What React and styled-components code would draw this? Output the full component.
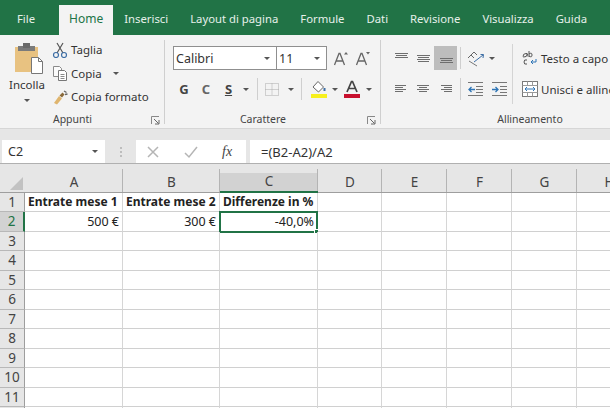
import React from "react";
import styled, { createGlobalStyle, css } from "styled-components";

const GlobalStyle = createGlobalStyle`
  html, body {
    margin: 0;
    padding: 0;
    background: #ffffff;
  }
  body {
    width: 610px;
    height: 408px;
    overflow: hidden;
    font-family: "Noto Sans", "Open Sans", sans-serif;
  }
  * { box-sizing: border-box; }
`;

const Window = styled.div`
  width: 610px;
  height: 408px;
  overflow: hidden;
  display: flex;
  flex-direction: column;
`;

const TabBar = styled.div`
  height: 35px;
  flex: none;
  display: flex;
  align-items: stretch;
  padding: 5px 0 0 6px;
  background: #217346;
  white-space: nowrap;
`;

const Tab = styled.div`
  display: flex;
  align-items: center;
  padding: 0 11px 4px;
  font-size: 11.3px;
  color: #e6f0ea;
  ${(p) => p.$first && css`margin-right: 13px;`}
  ${(p) =>
    p.$active &&
    css`
      padding: 0 10px 4px;
      background: #f3f3f3;
      color: #217346;
      font-size: 12px;
    `}
`;

const Ribbon = styled.div`
  height: 94px;
  flex: none;
  display: flex;
  background: #f3f3f3;
  border-bottom: 1px solid #d6d6d6;
  color: #333333;
  overflow: hidden;
`;

const Group = styled.div`
  position: relative;
  flex: none;
  width: ${(p) => p.$width}px;
  display: flex;
  flex-direction: column;
  &::after {
    content: "";
    position: absolute;
    right: 0;
    top: 5px;
    bottom: 4px;
    width: 1px;
    background: ${(p) => (p.$last ? "transparent" : "#cfcfcf")};
  }
`;

const GroupBody = styled.div`
  flex: 1;
  min-height: 0;
  display: flex;
  padding-left: ${(p) => p.$left || 0}px;
`;

const GroupLabel = styled.div`
  height: 18px;
  flex: none;
  padding-right: ${(p) => (p.$last ? 0 : 20)}px;
  text-align: center;
  font-size: 10.5px;
  line-height: 19px;
  color: #444444;
`;

const Launcher = styled.svg`
  position: absolute;
  right: 5px;
  bottom: 3px;
  width: 9px;
  height: 9px;
`;

const PasteButton = styled.div`
  width: 52px;
  flex: none;
  padding: 8px 0 0 2px;
  display: flex;
  flex-direction: column;
  align-items: center;
  font-size: 11.5px;
  line-height: 15px;
  svg.main { margin: 0 0 3px 3px; }
`;

const SmallStack = styled.div`
  display: flex;
  flex-direction: column;
  padding-top: 3px;
`;

const SmallRow = styled.div`
  height: 23.5px;
  flex: none;
  display: flex;
  align-items: center;
  gap: 3px;
  font-size: 11.5px;
  white-space: nowrap;
`;

const Caret = styled.span`
  display: inline-block;
  width: 0;
  height: 0;
  flex: none;
  margin: ${(p) => p.$margin || "0"};
  border-left: 3px solid transparent;
  border-right: 3px solid transparent;
  border-top: 3px solid #555555;
`;

const Rows = styled.div`
  display: flex;
  flex-direction: column;
  padding-top: 11px;
`;

const ToolRow = styled.div`
  height: 24px;
  flex: none;
  display: flex;
  align-items: center;
  margin-bottom: ${(p) => p.$gap || 0}px;
`;

const SelectBox = styled.div`
  width: ${(p) => p.$width}px;
  height: 24px;
  margin-left: ${(p) => (p.$overlap ? -1 : 0)}px;
  display: flex;
  align-items: center;
  justify-content: space-between;
  padding: 0 6px 0 2px;
  background: #ffffff;
  border: 1px solid #8f8f8f;
  font-size: 12.5px;
  color: #333333;
`;

const Tool = styled.div`
  width: ${(p) => p.$width || 22}px;
  height: 24px;
  flex: none;
  margin-left: ${(p) => p.$left || 0}px;
  display: flex;
  align-items: center;
  justify-content: center;
  background: ${(p) => (p.$pressed ? "#bdbdbd" : "transparent")};
`;

const FormatLetter = styled.span`
  font-size: 13px;
  font-weight: 700;
  color: ${(p) => p.$color || "#444444"};
  text-decoration: ${(p) => (p.$underline ? "underline" : "none")};
`;

const VDivider = styled.div`
  width: 1px;
  height: 22px;
  flex: none;
  margin: ${(p) => p.$margin || "0"};
  background: #cfcfcf;
`;

const TallDivider = styled.div`
  width: 1px;
  height: 60px;
  flex: none;
  margin: 9px 9px 0 5px;
  background: #d4d4d4;
`;

const WrapRow = styled(SmallRow)`
  height: 24px;
`;

const FormulaBar = styled.div`
  height: 34px;
  flex: none;
  display: flex;
  align-items: flex-end;
  padding-left: 2px;
  background: #e6e6e6;
`;

const NameBox = styled.div`
  width: 103px;
  height: 23px;
  flex: none;
  display: flex;
  align-items: center;
  justify-content: space-between;
  padding: 0 7px 0 6px;
  background: #ffffff;
  font-size: 12.5px;
  color: #333333;
`;

const Grip = styled.div`
  width: 31px;
  height: 23px;
  flex: none;
  display: flex;
  flex-direction: column;
  align-items: center;
  justify-content: center;
  gap: 2px;
  i {
    width: 2px;
    height: 2px;
    background: #bdbdbd;
  }
`;

const FormulaButtons = styled.div`
  width: 110px;
  height: 23px;
  flex: none;
  display: flex;
  align-items: center;
  background: #ffffff;
  padding-left: 10px;
  gap: 24px;
`;

const FxLabel = styled.span`
  font-family: "Liberation Serif", serif;
  font-style: italic;
  font-size: 14px;
  color: #444444;
`;

const FormulaInput = styled.div`
  flex: 1;
  height: 23px;
  margin-left: 4px;
  display: flex;
  align-items: center;
  padding-left: 11px;
  background: #ffffff;
  font-size: 13px;
  color: #333333;
`;

const Sheet = styled.div`
  flex: 1;
  min-height: 0;
  display: grid;
  grid-template-columns: 25px 98px 97px 98px 64px 65px 65px 65px 65px;
  grid-template-rows: 28.5px repeat(12, 19.5px);
  background: #ffffff;
  border-top: 1px solid #b0b0b0;
`;

const Corner = styled.div`
  position: relative;
  background: #e6e6e6;
  border-bottom: 1px solid #9e9e9e;
  &::after {
    content: "";
    position: absolute;
    right: 2px;
    bottom: 2px;
    border-style: solid;
    border-width: 0 0 13px 13px;
    border-color: transparent transparent #c2c2c2 transparent;
  }
`;

const ColHead = styled.div`
  position: relative;
  display: flex;
  align-items: flex-end;
  justify-content: center;
  padding-bottom: 1px;
  font-size: 13.5px;
  line-height: 18px;
  color: #444444;
  background: linear-gradient(#e6e6e6 0 9px, ${(p) => (p.$selected ? "#d2d2d2" : "#e6e6e6")} 9px);
  border-bottom: ${(p) => (p.$selected ? "2px solid #217346" : "1px solid #9e9e9e")};
  &::after {
    content: "";
    position: absolute;
    right: 0;
    top: 5px;
    bottom: 0;
    width: 1px;
    background: #b4b4b4;
  }
`;

const RowHead = styled.div`
  display: flex;
  align-items: center;
  justify-content: center;
  font-size: 13.5px;
  color: ${(p) => (p.$selected ? "#217346" : "#444444")};
  background: ${(p) => (p.$selected ? "#d2d2d2" : "#e6e6e6")};
  border-bottom: 1px solid #b8b8b8;
  border-right: ${(p) => (p.$selected ? "2px solid #217346" : "1px solid #9e9e9e")};
`;

const Cell = styled.div`
  position: relative;
  display: flex;
  align-items: center;
  justify-content: ${(p) => (p.$right ? "flex-end" : "flex-start")};
  padding: 0 3px;
  font-size: ${(p) => (p.$bold ? 12 : 12.5)}px;
  font-weight: ${(p) => (p.$bold ? 700 : 400)};
  color: #222222;
  white-space: nowrap;
  border-right: 1px solid #d6d6d6;
  border-bottom: 1px solid #d0d0d0;
  ${(p) =>
    p.$active &&
    css`
      border: 2px solid #217346;
      margin: -1px 0 -1px -1px;
      padding: 0 2px;
    `}
`;

const FillHandle = styled.span`
  position: absolute;
  right: -3px;
  bottom: -3px;
  width: 5px;
  height: 5px;
  background: #217346;
  border: 1px solid #ffffff;
`;

const Icon = ({ size = 16, w, h, children }) => (
  <svg width={w || size} height={h || size} viewBox={`0 0 ${w || size} ${h || size}`} fill="none">
    {children}
  </svg>
);

const PasteIcon = () => (
  <svg className="main" width="30" height="31" viewBox="0 0 30 31" fill="none">
    <rect x="1" y="4" width="23" height="25" fill="#e8c281" />
    <rect x="4" y="3" width="17" height="5" fill="#7b7b7b" />
    <rect x="9" y="0" width="7" height="5" fill="#6a6a6a" />
    <path d="M17.5 14.5h7l4 4v12h-11z" fill="#ffffff" stroke="#777777" />
    <path d="M24.5 14.5v4h4" stroke="#777777" />
  </svg>
);

const ScissorsIcon = () => (
  <Icon>
    <path d="M5 1l6 10M11 1L5 11" stroke="#555555" strokeWidth="1.2" />
    <circle cx="4" cy="13" r="2.5" stroke="#3d6ea5" strokeWidth="1.2" />
    <circle cx="12" cy="13" r="2.5" stroke="#3d6ea5" strokeWidth="1.2" />
  </Icon>
);

const CopyIcon = () => (
  <Icon>
    <path d="M1.5 1.5h6l2 2v8h-8z" fill="#fbfbfb" stroke="#8a8a8a" />
    <path d="M6.5 5.5h6l2 2v8h-8z" fill="#ffffff" stroke="#777777" />
    <path d="M8.5 9.5h4M8.5 11.5h4M8.5 13.5h4" stroke="#8a8a8a" />
  </Icon>
);

const BrushIcon = () => (
  <Icon>
    <path d="M2 14l5-7 3 2.5-5 6z" fill="#dfb56e" />
    <path d="M7.5 6.5l3-3 2 2-2.5 3z" fill="#8a6a3a" />
    <path d="M12 2l2.5 1.5M13 5.5l2.5-.5" stroke="#666666" strokeWidth="1.4" />
  </Icon>
);

const GrowIcon = ({ down }) => (
  <Icon w={16} h={16}>
    <path d="M1.5 15L6 3.5h1L11.5 15M3.3 11h6.4" stroke="#666666" strokeWidth="1.3" />
    <path d={down ? "M11 2h4l-2 2.4z" : "M11 4.4h4L13 2z"} fill="#666666" />
  </Icon>
);

const BordersIcon = () => (
  <Icon>
    <rect x="1.5" y="2.5" width="13" height="12" stroke="#aaaaaa" strokeDasharray="1 1" />
    <path d="M8 2.5v12M1.5 8.5h13" stroke="#aaaaaa" strokeDasharray="1 1" />
  </Icon>
);

const FillIcon = () => (
  <Icon w={18} h={18}>
    <path d="M8 1.5l5.5 5.5-5 5L3 7z" fill="#ffffff" stroke="#666666" />
    <path d="M14.5 8v3" stroke="#3d6ea5" strokeWidth="2" />
    <rect x="1" y="14" width="16" height="4" fill="#f7f01e" />
  </Icon>
);

const FontColorIcon = () => (
  <Icon w={18} h={18}>
    <path d="M4 12L8.5 1.5h1L14 12M5.8 8.5h6.4" stroke="#444444" strokeWidth="1.7" />
    <rect x="1" y="14" width="16" height="4" fill="#c8102e" />
  </Icon>
);

const AlignIcon = ({ lines }) => (
  <Icon>
    {lines.map(([y, x1, x2]) => (
      <path key={y} d={`M${x1} ${y}.5H${x2}`} stroke="#6e6e6e" />
    ))}
  </Icon>
);

const OrientIcon = () => (
  <Icon w={20} h={18}>
    <path d="M2 9l6-6 3 3M5 6l3 3" stroke="#666666" />
    <path d="M8 13L17 6M14.5 5.5L17.5 5.5 17 9" stroke="#3d6ea5" />
    <path d="M3 12l8 5" stroke="#777777" />
  </Icon>
);

const IndentIcon = ({ flip }) => (
  <Icon>
    <path d="M1 1.5h15M1 14.5h15M9 5.5h7M9 8.5h7M9 11.5h7" stroke="#777777" />
    {flip ? (
      <path d="M1 8.5h6M4.5 6l2.5 2.5L4.5 11" stroke="#2e75b6" strokeWidth="1.3" />
    ) : (
      <path d="M2 8.5h6M4.5 6L2 8.5 4.5 11" stroke="#2e75b6" strokeWidth="1.3" />
    )}
  </Icon>
);

const WrapIcon = () => (
  <Icon>
    <path d="M1 6.5q0-3 3-3t0 3q-3 1-3 0M5 3.5v3M7 1v6M7 6q3 2 3-1t-3-1" stroke="#444444" strokeWidth=".9" />
    <path d="M5 10q-3-1-3 2t3 2" stroke="#444444" strokeWidth=".9" />
    <path d="M14 9v3h-5M11 10l-2 2 2 2" stroke="#2e75b6" />
  </Icon>
);

const MergeIcon = () => (
  <Icon>
    <rect x="0.5" y="0.5" width="15" height="15" fill="#ffffff" stroke="#7a7a7a" />
    <path d="M0.5 4.5h15M0.5 11.5h15M5.5 .5v4M10.5 .5v4M5.5 11.5v4M10.5 11.5v4" stroke="#9a9a9a" />
    <path d="M3 8h10M5 6L3 8l2 2M11 6l2 2-2 2" stroke="#2e75b6" />
  </Icon>
);

const LauncherIcon = () => (
  <Launcher viewBox="0 0 9 9" fill="none">
    <path d="M.5 8V.5H8" stroke="#888888" />
    <path d="M3 3l4.5 4.5M8 4v4H4" stroke="#666666" />
  </Launcher>
);

const TABS = ["Inserisci", "Layout di pagina", "Formule", "Dati", "Revisione", "Visualizza", "Guida"];
const COLUMNS = ["A", "B", "C", "D", "E", "F", "G", "H"];

const CELLS = {
  A1: { text: "Entrate mese 1", bold: true },
  B1: { text: "Entrate mese 2", bold: true },
  C1: { text: "Differenze in %", bold: true },
  A2: { text: "500 €", right: true },
  B2: { text: "300 €", right: true },
  C2: { text: "-40,0%", right: true, active: true },
};

const alignTop = [[3, 2, 15], [5, 3, 14], [7, 2, 15]];
const alignMiddle = [[5, 2, 15], [7, 3, 14], [9, 2, 15], [11, 3, 14]];
const alignBottom = [[8, 2, 15], [10, 3, 14], [12, 2, 15]];
const alignLeft = [[4, 2, 13], [6, 2, 10], [8, 2, 13], [10, 2, 10]];
const alignCenter = [[4, 2, 14], [6, 4, 12], [8, 2, 14], [10, 4, 12]];
const alignRight = [[4, 3, 14], [6, 6, 14], [8, 3, 14], [10, 6, 14]];

export default function App() {
  return (
    <Window>
      <GlobalStyle />
      <TabBar>
        <Tab $first>File</Tab>
        <Tab $active>Home</Tab>
        {TABS.map((t) => (
          <Tab key={t}>{t}</Tab>
        ))}
      </TabBar>

      <Ribbon>
        <Group $width={165}>
          <GroupBody>
            <PasteButton>
              <PasteIcon />
              Incolla
              <Caret $margin="7px 0 0" />
            </PasteButton>
            <SmallStack>
              <SmallRow><ScissorsIcon />Taglia</SmallRow>
              <SmallRow><CopyIcon />Copia<Caret $margin="0 0 0 8px" /></SmallRow>
              <SmallRow><BrushIcon />Copia formato</SmallRow>
            </SmallStack>
          </GroupBody>
          <GroupLabel>Appunti</GroupLabel>
          <LauncherIcon />
        </Group>

        <Group $width={216}>
          <GroupBody $left={8}>
            <Rows>
              <ToolRow $gap={7}>
                <SelectBox $width={104}>Calibri<Caret /></SelectBox>
                <SelectBox $width={51} $overlap>11<Caret /></SelectBox>
                <Tool $width={22} $left={3}><GrowIcon /></Tool>
                <Tool $width={22}><GrowIcon down /></Tool>
              </ToolRow>
              <ToolRow>
                <Tool $width={22}><FormatLetter>G</FormatLetter></Tool>
                <Tool $width={22}><FormatLetter $color="#666666">C</FormatLetter></Tool>
                <Tool $width={23}><FormatLetter $underline>S</FormatLetter></Tool>
                <Caret $margin="0 8px 0 3px" />
                <VDivider $margin="0 6px 0 0" />
                <BordersIcon />
                <Caret $margin="0 7px 0 8px" />
                <VDivider $margin="0 8px 0 0" />
                <FillIcon />
                <Caret $margin="0 5px 0 4px" />
                <FontColorIcon />
                <Caret $margin="0 0 0 5px" />
              </ToolRow>
            </Rows>
          </GroupBody>
          <GroupLabel>Carattere</GroupLabel>
          <LauncherIcon />
        </Group>

        <Group $width={298} $last>
          <GroupBody $left={9}>
            <Rows>
              <ToolRow $gap={7}>
                <Tool $width={22}><AlignIcon lines={alignTop} /></Tool>
                <Tool $width={22}><AlignIcon lines={alignMiddle} /></Tool>
                <Tool $width={23} $pressed><AlignIcon lines={alignBottom} /></Tool>
                <VDivider $margin="0 5px 0 3px" />
                <OrientIcon />
                <Caret $margin="0 0 0 3px" />
              </ToolRow>
              <ToolRow>
                <Tool $width={22}><AlignIcon lines={alignLeft} /></Tool>
                <Tool $width={22}><AlignIcon lines={alignCenter} /></Tool>
                <Tool $width={23}><AlignIcon lines={alignRight} /></Tool>
                <VDivider $margin="0 6px 0 3px" />
                <IndentIcon />
                <Tool $width={8} />
                <IndentIcon flip />
              </ToolRow>
            </Rows>
            <TallDivider />
            <Rows>
              <ToolRow $gap={7}>
                <WrapRow><WrapIcon />Testo a capo</WrapRow>
              </ToolRow>
              <ToolRow>
                <WrapRow><MergeIcon />Unisci e allinea al centro</WrapRow>
              </ToolRow>
            </Rows>
          </GroupBody>
          <GroupLabel $last>Allineamento</GroupLabel>
        </Group>
      </Ribbon>

      <FormulaBar>
        <NameBox>C2<Caret /></NameBox>
        <Grip><i /><i /><i /></Grip>
        <FormulaButtons>
          <Icon size={14}>
            <path d="M2 2l10 10M12 2L2 12" stroke="#b5b5b5" strokeWidth="1.5" />
          </Icon>
          <Icon size={14}>
            <path d="M1 8l4 4 8-10" stroke="#b5b5b5" strokeWidth="1.5" />
          </Icon>
          <FxLabel>fx</FxLabel>
        </FormulaButtons>
        <FormulaInput>=(B2-A2)/A2</FormulaInput>
      </FormulaBar>

      <Sheet>
        <Corner />
        {COLUMNS.map((c) => (
          <ColHead key={c} $selected={c === "C"}>{c}</ColHead>
        ))}
        {Array.from({ length: 12 }, (_, i) => i + 1).map((row) => (
          <React.Fragment key={row}>
            <RowHead $selected={row === 2}>{row}</RowHead>
            {COLUMNS.map((c) => {
              const cell = CELLS[`${c}${row}`] || {};
              return (
                <Cell key={c} $bold={cell.bold} $right={cell.right} $active={cell.active}>
                  {cell.text}
                  {cell.active && <FillHandle />}
                </Cell>
              );
            })}
          </React.Fragment>
        ))}
      </Sheet>
    </Window>
  );
}
